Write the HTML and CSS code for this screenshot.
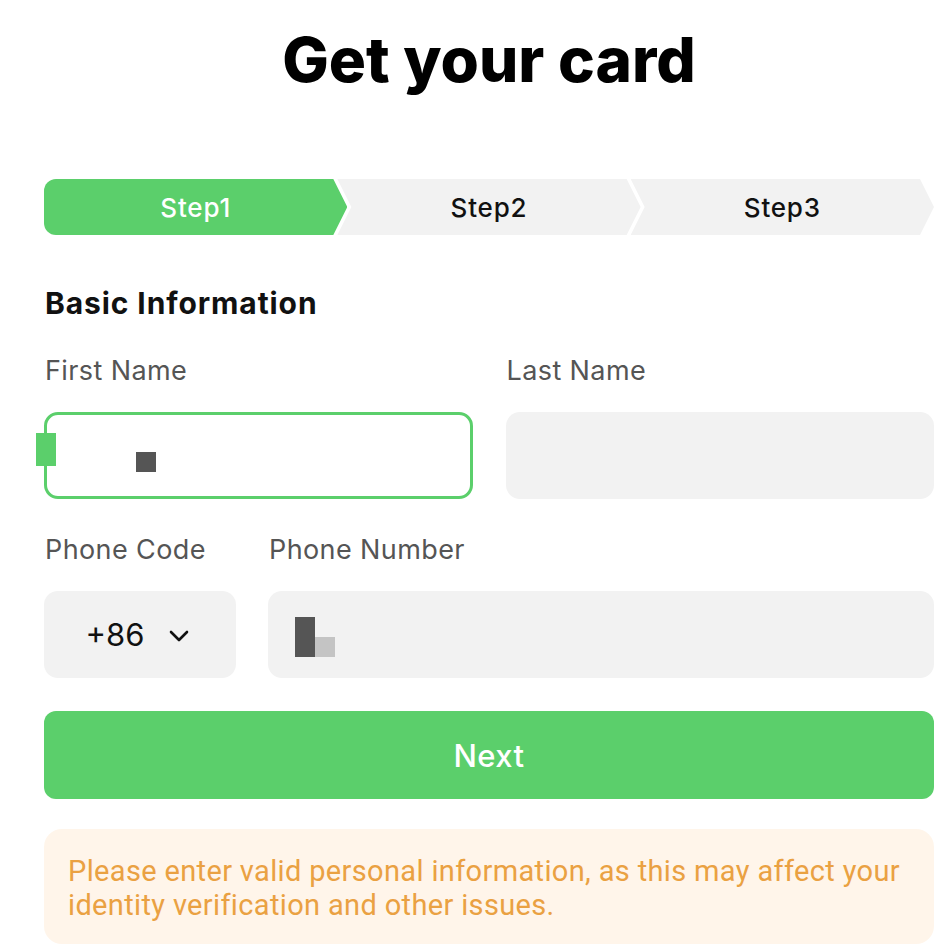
FILE: index.html
```html
<!DOCTYPE html>
<html lang="en">
<head>
    <meta charset="UTF-8">
    <meta name="viewport" content="width=device-width, initial-scale=1.0">
    <title>Get your card</title>
    <link rel="stylesheet" href="styles.css">
</head>
<body>
    <div class="page">
        <h1 class="title">Get your card</h1>

        <div class="steps">
            <div class="step step-first active">Step1</div>
            <div class="step">Step2</div>
            <div class="step step-last">Step3</div>
        </div>

        <h2 class="section-title">Basic Information</h2>

        <div class="row">
            <div class="field">
                <label class="label">First Name</label>
                <div class="input input-focus">
                    <span class="caret"></span>
                    <span class="mask mask-dark"></span>
                </div>
            </div>
            <div class="field">
                <label class="label">Last Name</label>
                <div class="input"></div>
            </div>
        </div>

        <div class="row row-phone">
            <div class="field field-code">
                <label class="label">Phone Code</label>
                <div class="input select">
                    <span class="code">+86</span>
                    <svg class="chevron" width="22" height="14" viewBox="0 0 22 14"><path d="M3 3l8 8 8-8" fill="none" stroke="#111" stroke-width="2.6" stroke-linecap="round" stroke-linejoin="round"/></svg>
                </div>
            </div>
            <div class="field field-number">
                <label class="label">Phone Number</label>
                <div class="input">
                    <span class="mask mask-dark mask-tall"></span><span class="mask mask-light"></span>
                </div>
            </div>
        </div>

        <button class="btn-next">Next</button>

        <div class="notice">Please enter valid personal information, as this may affect your identity verification and other issues.</div>
    </div>
</body>
</html>
```

FILE: styles.css
```css
body {
    margin: 0;
    background-color: #ffffff;
    font-family: Inter, "Noto Sans", sans-serif;
    color: #111111;
}
.page {
    width: 890px;
    margin-left: 44px;
    padding-top: 22px;
}
.title {
    margin: 0;
    text-align: center;
    font-size: 62px;
    font-weight: 800;
    letter-spacing: 0;
    line-height: 76px;
    color: #000000;
}
.steps {
    display: flex;
    margin-top: 81px;
    height: 56px;
}
.step {
    flex: 1;
    display: flex;
    align-items: center;
    justify-content: center;
    background-color: #f2f2f2;
    font-size: 26px;
    font-weight: 500;
    letter-spacing: 0.8px;
    color: #111111;
    margin-left: -10px;
    clip-path: polygon(0 0, calc(100% - 14px) 0, 100% 50%, calc(100% - 14px) 100%, 0 100%, 14px 50%);
}
.step-first {
    margin-left: 0;
    border-radius: 12px 0 0 12px;
    clip-path: polygon(0 0, calc(100% - 14px) 0, 100% 50%, calc(100% - 14px) 100%, 0 100%);
}
.step.active {
    background-color: #5bcf6b;
    color: #ffffff;
}
.section-title {
    margin: 50px 0 0 1px;
    font-size: 30px;
    font-weight: 700;
    letter-spacing: 0.9px;
    line-height: 36px;
}
.row {
    display: flex;
    gap: 33px;
    margin-top: 34px;
}
.row-phone {
    gap: 32px;
    margin-top: 35px;
}
.field {
    flex: 1;
    display: flex;
    flex-direction: column;
}
.field-code {
    flex: 0 0 192px;
}
.label {
    font-size: 27px;
    color: #555555;
    letter-spacing: 0.4px;
    line-height: 32px;
    margin-left: 1px;
}
.input {
    margin-top: 25px;
    height: 87px;
    box-sizing: border-box;
    border-radius: 14px;
    background-color: #f2f2f2;
    display: flex;
    align-items: center;
    position: relative;
}
.input-focus {
    background-color: #ffffff;
    border: 3px solid #5bcf6b;
}
.caret {
    position: absolute;
    left: -11px;
    top: 18px;
    width: 20px;
    height: 33px;
    background-color: #5bcf6b;
}
.mask {
    display: inline-block;
}
.mask-dark {
    width: 20px;
    height: 20px;
    background-color: #555555;
    margin-left: 89px;
    margin-top: 12px;
}
.mask-tall {
    width: 20px;
    height: 40px;
    margin-left: 27px;
    margin-top: 4px;
}
.mask-light {
    width: 20px;
    height: 20px;
    background-color: #c4c4c4;
    margin-top: 24px;
}
.select {
    justify-content: center;
    gap: 24px;
    padding-right: 4px;
}
.code {
    font-size: 31px;
    color: #111111;
}
.chevron {
    margin-top: 2px;
}
.btn-next {
    display: block;
    width: 100%;
    margin-top: 33px;
    height: 88px;
    border: none;
    border-radius: 12px;
    background-color: #5bcf6b;
    color: #ffffff;
    font-family: Inter, "Noto Sans", sans-serif;
    font-size: 31px;
    font-weight: 500;
    letter-spacing: 0.4px;
    cursor: pointer;
}
.notice {
    margin-top: 30px;
    padding: 25px 24px 22px;
    border-radius: 18px;
    background-color: #fff5ea;
    color: #eaa142;
    font-family: Roboto, "Noto Sans", sans-serif;
    font-size: 29px;
    letter-spacing: 0.35px;
    line-height: 34px;
}
```
